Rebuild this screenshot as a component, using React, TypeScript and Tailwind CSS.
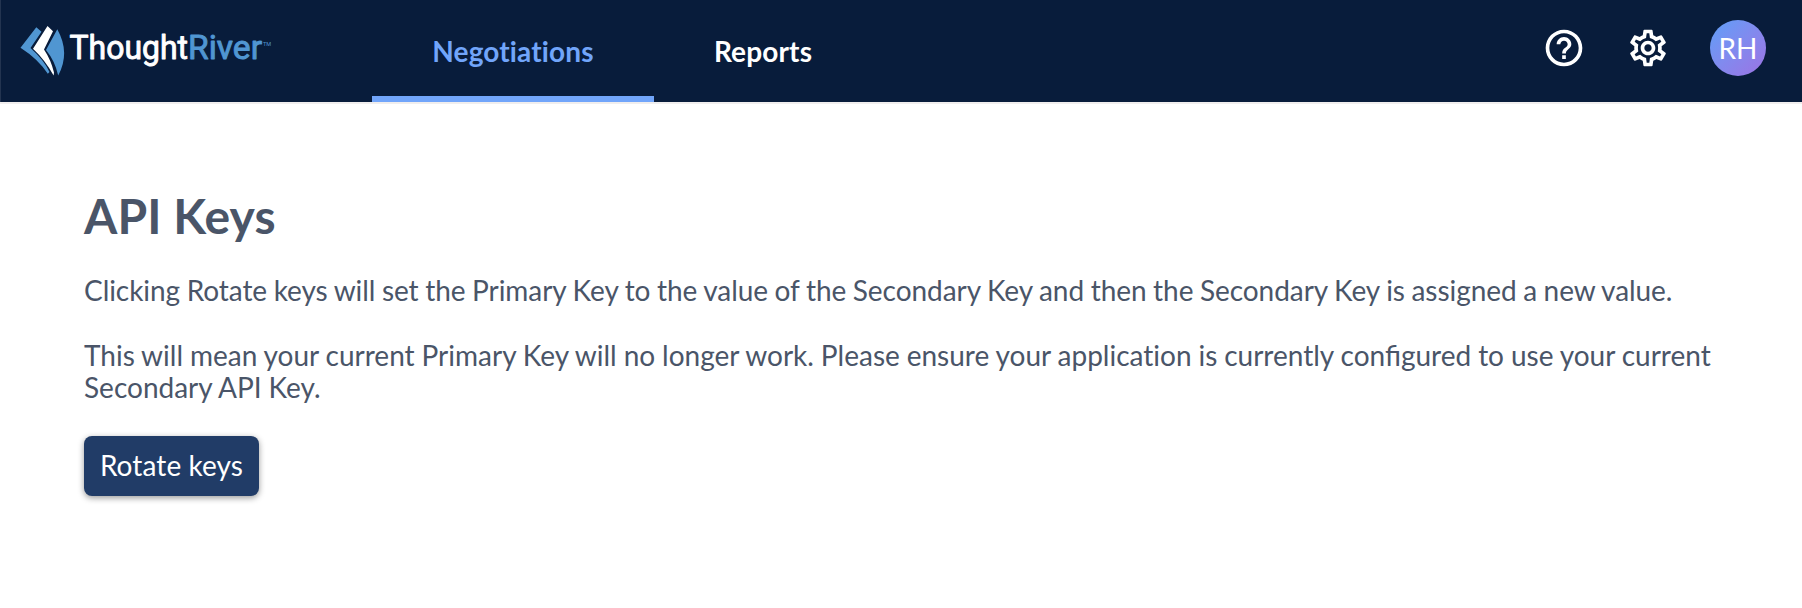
import { MdHelpOutline, MdOutlineSettings } from "react-icons/md";

function Logo() {
  return (
    <svg width="256" height="56" viewBox="18 20 256 56" role="img" aria-label="ThoughtRiver">
      <path d="M36.3 27.2 L41.5 31.8 L30.5 48 Q44 60 49.5 72 L47.8 73.8 Q38 59 20.5 47.8 Z" fill="#5096d2" />
      <path d="M47.5 26 L53 31.3 L44 49.5 Q51 60 54 72.5 L53.6 75.5 Q45 60 33 48.8 Z" fill="#ffffff" />
      <path d="M57.3 29.3 Q70.5 53 58.2 75.5 Q55 61 46 50 Z" fill="#5096d2" />
      <g fontFamily="Roboto, sans-serif" fontSize="33" fontWeight="400" strokeWidth="0.9" strokeLinejoin="round">
        <text x="69.5" y="59" fill="#ffffff" stroke="#ffffff" textLength="118.5" lengthAdjust="spacingAndGlyphs">Thought</text>
        <text x="188" y="59" fill="#5096d2" stroke="#5096d2" textLength="74" lengthAdjust="spacingAndGlyphs">River</text>
      </g>
      <text x="263" y="46" fontFamily="Roboto, sans-serif" fontSize="5.5" fill="#5096d2" textLength="8">TM</text>
    </svg>
  );
}

export default function App() {
  return (
    <div className="min-h-[608px] bg-white font-['Lato',sans-serif] text-[28px] leading-8 text-[#4a5568] [font-variant-ligatures:none]">
      <header className="flex h-[104px] border-b-2 border-[#f0eeee] bg-[#081c3b]">
        <div className="w-[372px] shrink-0 border-l border-[#233450] pt-5 pl-[17px]">
          <Logo />
        </div>
        <nav className="flex font-bold tracking-[0.15px]">
          <a className="flex w-[282px] justify-center border-b-[6px] border-[#71a5fa] pt-[35px] text-[#71a5fa]">Negotiations</a>
          <a className="flex w-[218px] justify-center pt-[35px] text-white">Reports</a>
        </nav>
        <div className="ml-auto flex h-24 items-center pr-9 text-white">
          <MdHelpOutline className="mr-10 size-11" />
          <MdOutlineSettings className="mr-10 size-11" />
          <div className="flex size-14 items-center justify-center rounded-full bg-linear-to-br from-[#5a9ff8] to-[#9b72e4]">RH</div>
        </div>
      </header>
      <main className="px-[84px] pt-[83px]">
        <h1 className="text-5xl leading-[58px] font-bold tracking-[0.1px]">API Keys</h1>
        <p className="mt-[29px] tracking-[-0.06px] [word-spacing:-0.5px]">
          Clicking Rotate keys will set the Primary Key to the value of the Secondary Key and then the Secondary Key is assigned a new value.
        </p>
        <p className="mt-[33px] [word-spacing:-0.25px]">
          This will mean your current Primary Key will no longer work. Please ensure your application is currently{" "}
          <span className="[font-variant-ligatures:common-ligatures]">configured</span> to use your current Secondary API Key.
        </p>
        <button className="mt-[33px] flex h-[60px] w-[175px] items-center justify-center rounded-lg bg-[#213c67] pb-0.5 tracking-[0.1px] text-white shadow-[0_2px_6px_rgba(0,0,0,0.4)]">
          Rotate keys
        </button>
      </main>
    </div>
  );
}
